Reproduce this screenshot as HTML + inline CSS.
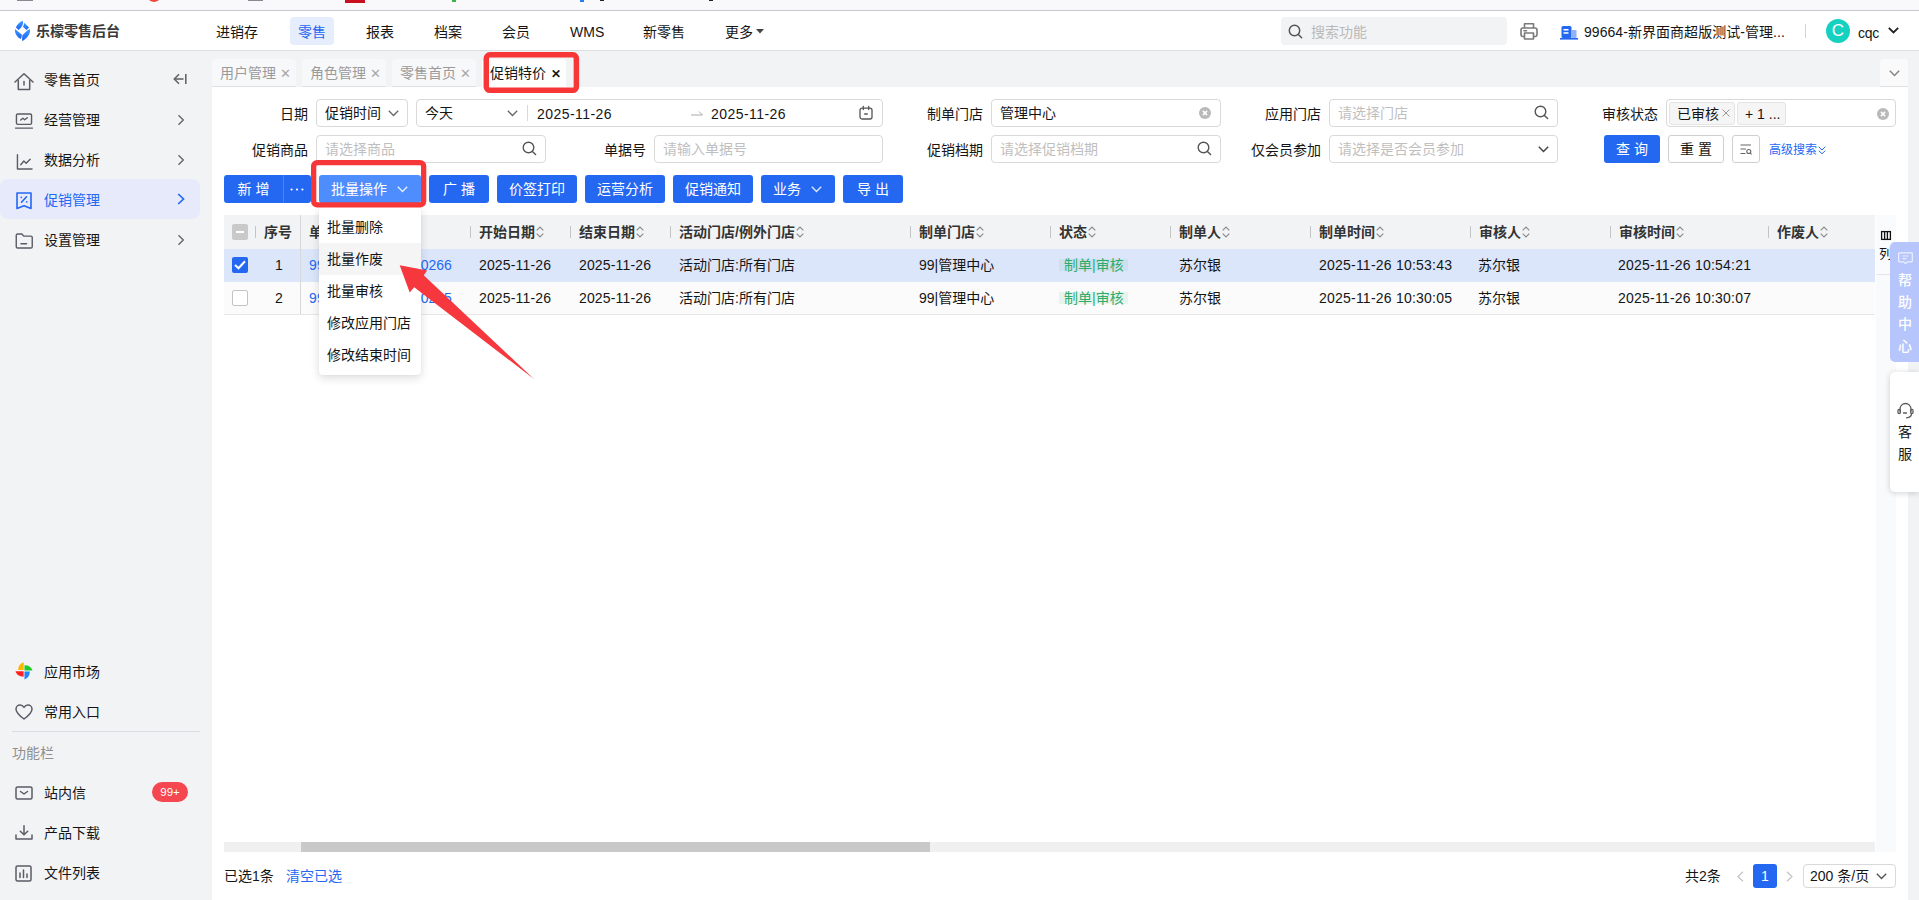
<!DOCTYPE html>
<html lang="zh-CN">
<head>
<meta charset="utf-8">
<title>促销特价 - 乐檬零售后台</title>
<style>
*{box-sizing:border-box;margin:0;padding:0}
html,body{width:1919px;height:900px;overflow:hidden}
body{position:relative;background:#f2f3f5;font-family:"Liberation Sans","Noto Sans CJK SC",sans-serif;font-size:14px;color:#151515;line-height:1}
.abs{position:absolute}
.t{position:absolute;white-space:nowrap;line-height:20px;height:20px}
svg{position:absolute;overflow:visible}
/* top browser strip */
#strip{left:0;top:0;width:1919px;height:11px;background:#f9f9fb;border-bottom:1px solid #c9c9cd}
/* header */
#hdr{left:0;top:11px;width:1919px;height:40px;background:#fff;border-bottom:1px solid #dcdde0}
.nav{top:11px;font-size:14px;color:#151515}
/* sidebar */
#side{left:0;top:51px;width:212px;height:849px;background:#f2f3f5}
.sm{left:44px;font-size:14px;color:#151515}
/* tabs */
.tab{top:59px;height:28px;width:84px;background:#f7f8fa;border-bottom:1px solid #dfe0e3;border-radius:4px 4px 0 0;color:#9a9a9a;font-size:14px;line-height:29.5px;padding-left:8px;white-space:nowrap;overflow:hidden}
.tab i{font-style:normal;font-size:12.5px;margin-left:4px;color:#a8a8a8}
/* content */
#main{left:212px;top:87px;width:1696px;height:813px;background:#fff}
.lbl{font-size:14px;color:#151515;text-align:right}
.inp{position:absolute;height:28px;border:1px solid #d9d9d9;border-radius:4px;background:#fff;font-size:14px;line-height:26px;padding-left:8px;color:#151515;white-space:nowrap}
.ph{color:#bfbfbf}
.btn{position:absolute;top:175px;height:28px;background:#2468f2;color:#fff;border-radius:3px;font-size:14px;line-height:29px;text-align:center;white-space:nowrap}
/* table */
.th{position:absolute;top:215px;height:34px;line-height:34px;font-weight:bold;font-size:14px;color:#333;white-space:nowrap}
.sep{position:absolute;top:226px;width:1px;height:12px;background:#c4c4c4}
.td{position:absolute;height:33px;line-height:33px;font-size:14px;color:#151515;white-space:nowrap}
.mi{position:absolute;left:0;width:102px;height:32px;line-height:33.5px;padding-left:8px;font-size:14px;color:#151515;white-space:nowrap}
</style>
</head>
<body>
<!-- browser strip remnants -->
<div id="strip" class="abs"></div>
<div class="abs" style="left:17px;top:0;width:16px;height:1px;background:#8a8a90"></div>
<div class="abs" style="left:148px;top:-8px;width:12px;height:10px;border-radius:50%;background:#f0483e"></div>
<div class="abs" style="left:248px;top:0;width:15px;height:1px;background:#8a8a90"></div>
<div class="abs" style="left:345px;top:0;width:20px;height:3px;background:#c8101e"></div>
<div class="abs" style="left:452px;top:0;width:4px;height:2px;background:#3bb54a"></div>
<div class="abs" style="left:580px;top:0;width:4px;height:2px;background:#2b7cf0"></div>
<div class="abs" style="left:600px;top:0;width:4px;height:1px;background:#222"></div>
<div class="abs" style="left:709px;top:0;width:4px;height:1px;background:#222"></div>

<!-- header -->
<div id="hdr" class="abs"></div>
<svg style="left:10px;top:16px" width="30" height="30" viewBox="0 0 30 30">
  <defs><linearGradient id="lg" x1="0" y1="0" x2="0" y2="1"><stop offset="0" stop-color="#3d9bff"/><stop offset="1" stop-color="#1f63f3"/></linearGradient></defs>
  <g fill="url(#lg)">
  <path d="M12.9 4.8 C13.4 8.6 12.4 10.6 8.6 14.1 L5.9 11.4 C6.6 9 10.2 5.6 12.9 4.8 Z"/>
  <path d="M14.2 6.8 L19.1 11.5 L16.5 14 L13 10.7 C13.8 9.3 14.1 8.1 14.2 6.8 Z"/>
  <path d="M5 13 L12 18.8 C11.8 20.5 11.4 21.8 10.8 23.1 C6.8 20.8 4.5 17.4 5 13 Z"/>
  <path d="M20 13 C20.6 18.5 16.4 23 12.2 25 C11.9 22.6 12.1 20.6 12.5 18.9 L17.3 14.5 Z"/>
  </g>
</svg>
<div class="t" style="left:36px;top:21px;font-size:14px;font-weight:bold;color:#3a3a3a;letter-spacing:0">乐檬零售后台</div>

<div class="t nav" style="left:216px;top:22px">进销存</div>
<div class="abs" style="left:290px;top:17px;width:44px;height:28px;background:#e6edfd;border-radius:4px"></div>
<div class="t nav" style="left:298px;top:22px;color:#2468f2">零售</div>
<div class="t nav" style="left:366px;top:22px">报表</div>
<div class="t nav" style="left:434px;top:22px">档案</div>
<div class="t nav" style="left:502px;top:22px">会员</div>
<div class="t nav" style="left:570px;top:22px">WMS</div>
<div class="t nav" style="left:643px;top:22px">新零售</div>
<div class="t nav" style="left:725px;top:22px">更多</div>
<svg style="left:756px;top:29px" width="8" height="5" viewBox="0 0 8 5"><path d="M0 0 H8 L4 4.5 Z" fill="#444"/></svg>

<div class="abs" style="left:1281px;top:17px;width:226px;height:28px;background:#f2f3f5;border-radius:4px"></div>
<svg style="left:1288px;top:24px" width="15" height="15" viewBox="0 0 15 15" fill="none" stroke="#555" stroke-width="1.5"><circle cx="6.5" cy="6.5" r="5.2"/><path d="M10.4 10.4 L13.6 13.8" stroke-linecap="round"/></svg>
<div class="t" style="left:1311px;top:22px;color:#b9b9b9">搜索功能</div>
<svg style="left:1520px;top:21.5px" width="18" height="18" viewBox="0 0 18 18" fill="none" stroke="#7a7a7a" stroke-width="1.6" stroke-linejoin="round"><path d="M4.5 6 V1.8 H13.5 V6"/><rect x="1" y="6" width="16" height="8.5" rx="2"/><rect x="4.5" y="11" width="9" height="6" fill="#fff"/><path d="M4 8.8 H6.5" stroke-linecap="round"/></svg>
<svg style="left:1560px;top:26px" width="18" height="14" viewBox="0 0 18 14"><rect x="1.5" y="0" width="10" height="12" rx="1.5" fill="#2468f2"/><rect x="11.5" y="4" width="5" height="8" fill="#8fb2fa"/><rect x="0" y="12" width="18" height="1.6" fill="#2468f2"/><rect x="3.5" y="3" width="5" height="1.5" fill="#fff"/><rect x="3.5" y="6.2" width="5" height="1.5" fill="#fff"/></svg>
<div class="t" style="left:1584px;top:22px;letter-spacing:.05px">99664-新界面商超版测试-管理...</div>
<div class="abs" style="left:1805px;top:24px;width:1px;height:14px;background:#d4d4d4"></div>
<div class="abs" style="left:1826px;top:19px;width:24px;height:24px;border-radius:50%;background:#14d1c0;color:#fff;font-size:17px;line-height:24px;text-align:center">C</div>
<div class="t" style="left:1858px;top:22.5px;letter-spacing:-.3px">cqc</div>
<svg style="left:1888px;top:27px" width="11" height="7" viewBox="0 0 11 7" fill="none" stroke="#222" stroke-width="1.8"><path d="M0.8 0.8 L5.5 5.5 L10.2 0.8"/></svg>

<!-- sidebar -->
<div id="side" class="abs"></div>
<div class="abs" style="left:0;top:179px;width:200px;height:40px;border-radius:8px;background:#e6eafa"></div>

<svg style="left:14px;top:71.5px" width="20" height="20" viewBox="0 0 20 20" fill="none" stroke="#5b5b66" stroke-width="1.5" stroke-linejoin="round" stroke-linecap="round"><path d="M1 10 L10 1.8 L19 10"/><path d="M4.3 8.5 V17.5 H15.7 V8.5"/><path d="M10 9.5 V13"/></svg>
<div class="t sm" style="top:70px">零售首页</div>
<svg style="left:173px;top:73px" width="14" height="12" viewBox="0 0 14 12" fill="none" stroke="#666" stroke-width="1.6"><path d="M12.8 1 V11"/><path d="M10.5 6 H1.5"/><path d="M6 1.2 L1.3 6 L6 10.8"/></svg>

<svg style="left:15px;top:113px" width="18" height="17" viewBox="0 0 19 18" fill="none" stroke="#5b5b66" stroke-width="1.5" stroke-linejoin="round" stroke-linecap="round"><rect x="1.5" y="1" width="16" height="11" rx="1.5"/><path d="M0.5 16 H18.5"/><path d="M6 7.5 L8.3 5.5 L10.2 7.2 L13 5"/></svg>
<div class="t sm" style="top:110px">经营管理</div>
<svg style="left:177px;top:114px" width="8" height="12" viewBox="0 0 8 12" fill="none" stroke="#666" stroke-width="1.4"><path d="M1.5 1.2 L6.3 6 L1.5 10.8"/></svg>

<svg style="left:15.5px;top:153.5px" width="17" height="16" viewBox="0 0 18 17" fill="none" stroke="#5b5b66" stroke-width="1.5" stroke-linejoin="round" stroke-linecap="round"><path d="M1.5 0.8 V16 H17"/><path d="M5 11.5 L8.3 7.5 L10.8 9.8 L15 5.5"/></svg>
<div class="t sm" style="top:150px">数据分析</div>
<svg style="left:177px;top:154px" width="8" height="12" viewBox="0 0 8 12" fill="none" stroke="#666" stroke-width="1.4"><path d="M1.5 1.2 L6.3 6 L1.5 10.8"/></svg>

<svg style="left:16px;top:192px" width="16" height="18" viewBox="0 0 16 18" fill="none" stroke="#2468f2" stroke-width="1.6" stroke-linejoin="round" stroke-linecap="round"><path d="M1 1 H15 V16.5 L8 13.8 L1 16.5 Z"/><path d="M10.5 4.8 L5.5 10.2"/><path d="M5.3 5.3 V5.4 M10.7 9.8 V9.9"/></svg>
<div class="t sm" style="top:190px;color:#2468f2">促销管理</div>
<svg style="left:177px;top:193px" width="8" height="12" viewBox="0 0 8 12" fill="none" stroke="#2468f2" stroke-width="1.7"><path d="M1.2 1 L6.5 6 L1.2 11"/></svg>

<svg style="left:15px;top:233px" width="18.5" height="16" viewBox="0 0 19 17" fill="none" stroke="#5b5b66" stroke-width="1.5" stroke-linejoin="round" stroke-linecap="round"><path d="M1 2.5 Q1 1 2.5 1 H7 L9 3.3 H16.5 Q18 3.3 18 4.8 V14.5 Q18 16 16.5 16 H2.5 Q1 16 1 14.5 Z"/><path d="M6 11.5 H12"/></svg>
<div class="t sm" style="top:230px">设置管理</div>
<svg style="left:177px;top:234px" width="8" height="12" viewBox="0 0 8 12" fill="none" stroke="#666" stroke-width="1.4"><path d="M1.5 1.2 L6.3 6 L1.5 10.8"/></svg>

<!-- sidebar bottom -->
<svg style="left:8px;top:656px" width="32" height="32" viewBox="0 0 32 32"><path d="M15.7 6.3 V13.9 H10.2 C10.2 10 12.5 7.2 15.7 6.3 Z" fill="#ffb400"/><path d="M24.5 14.5 H16.5 V9.2 C20.5 9.2 23.5 11 24.5 14.5 Z" fill="#1ecb2b"/><path d="M7.5 15.3 H15.6 V20.7 C11.5 20.7 8.5 18.8 7.5 15.3 Z" fill="#ff2020"/><path d="M16.5 23.5 V15.6 H21.8 C21.8 19.5 19.8 22.3 16.5 23.5 Z" fill="#2285ff"/></svg>
<div class="t sm" style="top:662px">应用市场</div>
<svg style="left:15px;top:704px" width="18" height="16" viewBox="0 0 18 16" fill="none" stroke="#5b5b66" stroke-width="1.5" stroke-linejoin="round"><path d="M9 15 C3 10.5 1 8 1 5.2 C1 2.8 2.8 1 5 1 C6.8 1 8.2 2 9 3.5 C9.8 2 11.2 1 13 1 C15.2 1 17 2.8 17 5.2 C17 8 15 10.5 9 15 Z"/></svg>
<div class="t sm" style="top:702px">常用入口</div>
<div class="abs" style="left:12px;top:731px;width:188px;height:1px;background:#dcdde0"></div>
<div class="t" style="left:12px;top:743px;font-size:14px;color:#8f8f8f">功能栏</div>
<svg style="left:15px;top:786px" width="18" height="14" viewBox="0 0 18 14" fill="none" stroke="#5b5b66" stroke-width="1.5" stroke-linejoin="round" stroke-linecap="round"><rect x="1" y="1" width="16" height="12" rx="1.5"/><path d="M5.5 5.5 L9 8 L12.5 5.5"/></svg>
<div class="t sm" style="top:783px">站内信</div>
<div class="abs" style="left:152px;top:782px;width:36px;height:20px;border-radius:10px;background:#f5474f;color:#fff;font-size:11.5px;line-height:20px;text-align:center">99+</div>
<svg style="left:15px;top:825px" width="18" height="15" viewBox="0 0 18 15" fill="none" stroke="#5b5b66" stroke-width="1.5" stroke-linejoin="round" stroke-linecap="round"><path d="M9 0.8 V9.5"/><path d="M5.3 6.3 L9 9.8 L12.7 6.3"/><path d="M1 10 V14 H17 V10"/></svg>
<div class="t sm" style="top:823px">产品下载</div>
<svg style="left:15px;top:865px" width="17" height="17" viewBox="0 0 17 17" fill="none" stroke="#5b5b66" stroke-width="1.5" stroke-linejoin="round" stroke-linecap="round"><rect x="1" y="1" width="15" height="15" rx="1.5"/><path d="M5 8 V12.5 M8.5 5 V12.5 M12 9 V12.5"/></svg>
<div class="t sm" style="top:863px">文件列表</div>

<!-- tabs -->
<div class="abs tab" style="left:212px">用户管理<i>✕</i></div>
<div class="abs tab" style="left:302px">角色管理<i>✕</i></div>
<div class="abs tab" style="left:392px">零售首页<i>✕</i></div>
<div class="abs tab" style="left:482px;background:#fff;color:#151515;border-bottom-color:#fff;height:28px">促销特价<i style="color:#151515;font-weight:bold;font-size:11.5px;margin-left:5px">✕</i></div>
<div class="abs" style="left:1880px;top:59px;width:28px;height:28px;background:#fafafa;border-bottom:1px solid #dfe0e3;border-radius:4px 4px 0 0"></div>
<svg style="left:1888.5px;top:69.5px" width="11" height="7" viewBox="0 0 11 7" fill="none" stroke="#858585" stroke-width="1.5"><path d="M0.8 0.8 L5.5 5.5 L10.2 0.8"/></svg>

<div id="main" class="abs"></div>
<!-- right gutter tool column -->
<div class="abs" style="left:1876px;top:215px;width:20px;height:637px;background:#f9fafb"></div>

<!-- filter row 1 -->
<div class="t lbl" style="left:252px;top:104px;width:56px">日期</div>
<div class="inp" style="left:316px;top:99px;width:92px">促销时间</div>
<svg style="left:388px;top:110px" width="11" height="7" viewBox="0 0 11 7" fill="none" stroke="#666" stroke-width="1.3"><path d="M0.8 0.8 L5.5 5.5 L10.2 0.8"/></svg>
<div class="inp" style="left:416px;top:99px;width:467px">今天</div>
<svg style="left:507px;top:110px" width="11" height="7" viewBox="0 0 11 7" fill="none" stroke="#666" stroke-width="1.3"><path d="M0.8 0.8 L5.5 5.5 L10.2 0.8"/></svg>
<div class="abs" style="left:527px;top:105px;width:1px;height:16px;background:#d9d9d9"></div>
<div class="t" style="left:537px;top:104px;letter-spacing:.45px">2025-11-26</div>
<svg style="left:691px;top:110px" width="12" height="8" viewBox="0 0 12 8" fill="none" stroke="#aaa" stroke-width="1"><path d="M0 5 H11.5 L8 1.5"/></svg>
<div class="t" style="left:711px;top:104px;letter-spacing:.45px">2025-11-26</div>
<svg style="left:859px;top:106px" width="14" height="14" viewBox="0 0 14 14" fill="none" stroke="#555" stroke-width="1.3" stroke-linejoin="round"><rect x="1" y="2.2" width="12" height="10.8" rx="2"/><path d="M4.3 0.5 V3.5 M9.7 0.5 V3.5 M5.7 8 H8.3" stroke-linecap="round"/></svg>

<div class="t lbl" style="left:927px;top:104px;width:56px">制单门店</div>
<div class="inp" style="left:991px;top:99px;width:230px">管理中心</div>
<svg style="left:1199px;top:107px" width="12" height="12" viewBox="0 0 12 12"><circle cx="6" cy="6" r="6" fill="#b9b9b9"/><path d="M3.9 3.9 L8.1 8.1 M8.1 3.9 L3.9 8.1" stroke="#fff" stroke-width="1.5"/></svg>

<div class="t lbl" style="left:1265px;top:104px;width:56px">应用门店</div>
<div class="inp ph" style="left:1329px;top:99px;width:229px">请选择门店</div>
<svg style="left:1534px;top:105px" width="15" height="15" viewBox="0 0 15 15" fill="none" stroke="#555" stroke-width="1.4"><circle cx="6.5" cy="6.5" r="5.3"/><path d="M10.4 10.4 L13.6 13.6" stroke-linecap="round"/></svg>

<div class="t lbl" style="left:1602px;top:104px;width:56px">审核状态</div>
<div class="inp" style="left:1666px;top:99px;width:230px"></div>
<div class="abs" style="left:1669px;top:102px;width:66px;height:23px;background:#f5f5f5;border:1px solid #e4e4e4;border-radius:3px"></div>
<div class="t" style="left:1677px;top:104px">已审核</div>
<svg style="left:1722px;top:109px" width="8" height="8" viewBox="0 0 8 8" stroke="#999" stroke-width="1" fill="none"><path d="M0.5 0.5 L7.5 7.5 M7.5 0.5 L0.5 7.5"/></svg>
<div class="abs" style="left:1737px;top:102px;width:49px;height:23px;background:#f5f5f5;border:1px solid #e4e4e4;border-radius:3px"></div>
<div class="t" style="left:1745px;top:104px">+ 1 ...</div>
<svg style="left:1877px;top:108px" width="12" height="12" viewBox="0 0 12 12"><circle cx="6" cy="6" r="6" fill="#b9b9b9"/><path d="M3.9 3.9 L8.1 8.1 M8.1 3.9 L3.9 8.1" stroke="#fff" stroke-width="1.5"/></svg>

<!-- filter row 2 -->
<div class="t lbl" style="left:252px;top:140px;width:56px">促销商品</div>
<div class="inp ph" style="left:316px;top:135px;width:229.5px">请选择商品</div>
<svg style="left:522px;top:141px" width="15" height="15" viewBox="0 0 15 15" fill="none" stroke="#555" stroke-width="1.4"><circle cx="6.5" cy="6.5" r="5.3"/><path d="M10.4 10.4 L13.6 13.6" stroke-linecap="round"/></svg>
<div class="t lbl" style="left:590px;top:140px;width:56px">单据号</div>
<div class="inp ph" style="left:654px;top:135px;width:229px">请输入单据号</div>
<div class="t lbl" style="left:927px;top:140px;width:56px">促销档期</div>
<div class="inp ph" style="left:991px;top:135px;width:230px">请选择促销档期</div>
<svg style="left:1197px;top:141px" width="15" height="15" viewBox="0 0 15 15" fill="none" stroke="#555" stroke-width="1.4"><circle cx="6.5" cy="6.5" r="5.3"/><path d="M10.4 10.4 L13.6 13.6" stroke-linecap="round"/></svg>
<div class="t lbl" style="left:1241px;top:140px;width:80px">仅会员参加</div>
<div class="inp ph" style="left:1329px;top:135px;width:229px">请选择是否会员参加</div>
<svg style="left:1538px;top:146px" width="11" height="7" viewBox="0 0 11 7" fill="none" stroke="#444" stroke-width="1.5"><path d="M0.8 0.8 L5.5 5.5 L10.2 0.8"/></svg>

<div class="abs" style="left:1604px;top:135px;width:56px;height:28px;background:#2468f2;border-radius:3px;color:#fff;line-height:29.5px;text-align:center;font-size:14px">查 询</div>
<div class="abs" style="left:1668px;top:135px;width:56px;height:28px;background:#fff;border:1px solid #cfcfcf;border-radius:3px;color:#151515;line-height:27.5px;text-align:center;font-size:14px">重 置</div>
<div class="abs" style="left:1732px;top:135px;width:28px;height:28px;background:#fff;border:1px solid #cfcfcf;border-radius:3px"></div>
<svg style="left:1740px;top:144px" width="12" height="11" viewBox="0 0 12 11" fill="none" stroke="#666" stroke-width="1.1"><path d="M0.5 1 H11 M0.5 5 H6 M0.5 9.5 H5.5"/><circle cx="8.8" cy="7.5" r="2"/><path d="M10.3 9 L11.6 10.4"/></svg>
<div class="t" style="left:1769px;top:140px;font-size:12px;color:#2468f2">高级搜索</div>
<svg style="left:1818px;top:146px" width="8" height="9" viewBox="0 0 8 9" fill="none" stroke="#2468f2" stroke-width="1"><path d="M0.7 0.8 L4 4 L7.3 0.8 M0.7 4.6 L4 7.8 L7.3 4.6"/></svg>

<!-- action buttons -->
<div class="btn" style="left:224px;width:59px;border-radius:3px 0 0 3px">新 增</div>
<div class="btn" style="left:283px;width:28px;border-radius:0 3px 3px 0;border-left:1px solid #4a82f5"></div>
<svg style="left:290px;top:188px" width="14" height="3" viewBox="0 0 14 3" fill="#fff"><circle cx="1.6" cy="1.5" r="1.1"/><circle cx="7" cy="1.5" r="1.1"/><circle cx="12.4" cy="1.5" r="1.1"/></svg>
<div class="btn" style="left:319px;width:102px;background:#4d8dfd;text-align:left;padding-left:12px">批量操作</div>
<svg style="left:397px;top:186px" width="11" height="7" viewBox="0 0 11 7" fill="none" stroke="#fff" stroke-opacity=".85" stroke-width="1.4"><path d="M0.8 0.8 L5.5 5.5 L10.2 0.8"/></svg>
<div class="btn" style="left:429px;width:60px">广 播</div>
<div class="btn" style="left:497px;width:80px">价签打印</div>
<div class="btn" style="left:585px;width:80px">运营分析</div>
<div class="btn" style="left:673px;width:80px">促销通知</div>
<div class="btn" style="left:761px;width:74px;text-align:left;padding-left:12px">业务</div>
<svg style="left:811px;top:186px" width="11" height="7" viewBox="0 0 11 7" fill="none" stroke="#fff" stroke-opacity=".85" stroke-width="1.4"><path d="M0.8 0.8 L5.5 5.5 L10.2 0.8"/></svg>
<div class="btn" style="left:843px;width:60px">导 出</div>

<!-- table -->
<div class="abs" style="left:224px;top:215px;width:1651px;height:34px;background:#f2f3f5"></div>
<div class="abs" style="left:224px;top:249px;width:1651px;height:33px;background:#dce6fb"></div>
<div class="abs" style="left:224px;top:282px;width:1651px;height:33px;background:#fafbfa;border-bottom:1px solid #e6e6e6"></div>
<div class="abs" style="left:300px;top:215px;width:1px;height:99px;background:#d8d8d8"></div>
<div class="abs" style="left:232px;top:224px;width:16px;height:16px;background:#c9c9c9;border-radius:2px"></div>
<div class="abs" style="left:236px;top:231px;width:8px;height:2px;background:#fff"></div>
<div class="sep" style="left:255px"></div>
<div class="th" style="left:264px">序号</div>
<div class="th" style="left:309px">单据号</div>
<div class="sep" style="left:470px"></div>
<div class="th" style="left:479px">开始日期<svg style="position:relative;display:inline-block;vertical-align:-1px;margin-left:1px" width="8" height="12" viewBox="0 0 8 12" fill="none" stroke="#8a8a8a" stroke-width="1.15"><path d="M0.7 4.4 L4 1 L7.3 4.4 M0.7 7.6 L4 11 L7.3 7.6"/></svg></div>
<div class="sep" style="left:570px"></div>
<div class="th" style="left:579px">结束日期<svg style="position:relative;display:inline-block;vertical-align:-1px;margin-left:1px" width="8" height="12" viewBox="0 0 8 12" fill="none" stroke="#8a8a8a" stroke-width="1.15"><path d="M0.7 4.4 L4 1 L7.3 4.4 M0.7 7.6 L4 11 L7.3 7.6"/></svg></div>
<div class="sep" style="left:670px"></div>
<div class="th" style="left:679px">活动门店/例外门店<svg style="position:relative;display:inline-block;vertical-align:-1px;margin-left:1px" width="8" height="12" viewBox="0 0 8 12" fill="none" stroke="#8a8a8a" stroke-width="1.15"><path d="M0.7 4.4 L4 1 L7.3 4.4 M0.7 7.6 L4 11 L7.3 7.6"/></svg></div>
<div class="sep" style="left:910px"></div>
<div class="th" style="left:919px">制单门店<svg style="position:relative;display:inline-block;vertical-align:-1px;margin-left:1px" width="8" height="12" viewBox="0 0 8 12" fill="none" stroke="#8a8a8a" stroke-width="1.15"><path d="M0.7 4.4 L4 1 L7.3 4.4 M0.7 7.6 L4 11 L7.3 7.6"/></svg></div>
<div class="sep" style="left:1050px"></div>
<div class="th" style="left:1059px">状态<svg style="position:relative;display:inline-block;vertical-align:-1px;margin-left:1px" width="8" height="12" viewBox="0 0 8 12" fill="none" stroke="#8a8a8a" stroke-width="1.15"><path d="M0.7 4.4 L4 1 L7.3 4.4 M0.7 7.6 L4 11 L7.3 7.6"/></svg></div>
<div class="sep" style="left:1170px"></div>
<div class="th" style="left:1179px">制单人<svg style="position:relative;display:inline-block;vertical-align:-1px;margin-left:1px" width="8" height="12" viewBox="0 0 8 12" fill="none" stroke="#8a8a8a" stroke-width="1.15"><path d="M0.7 4.4 L4 1 L7.3 4.4 M0.7 7.6 L4 11 L7.3 7.6"/></svg></div>
<div class="sep" style="left:1310px"></div>
<div class="th" style="left:1319px">制单时间<svg style="position:relative;display:inline-block;vertical-align:-1px;margin-left:1px" width="8" height="12" viewBox="0 0 8 12" fill="none" stroke="#8a8a8a" stroke-width="1.15"><path d="M0.7 4.4 L4 1 L7.3 4.4 M0.7 7.6 L4 11 L7.3 7.6"/></svg></div>
<div class="sep" style="left:1470px"></div>
<div class="th" style="left:1479px">审核人<svg style="position:relative;display:inline-block;vertical-align:-1px;margin-left:1px" width="8" height="12" viewBox="0 0 8 12" fill="none" stroke="#8a8a8a" stroke-width="1.15"><path d="M0.7 4.4 L4 1 L7.3 4.4 M0.7 7.6 L4 11 L7.3 7.6"/></svg></div>
<div class="sep" style="left:1610px"></div>
<div class="th" style="left:1619px">审核时间<svg style="position:relative;display:inline-block;vertical-align:-1px;margin-left:1px" width="8" height="12" viewBox="0 0 8 12" fill="none" stroke="#8a8a8a" stroke-width="1.15"><path d="M0.7 4.4 L4 1 L7.3 4.4 M0.7 7.6 L4 11 L7.3 7.6"/></svg></div>
<div class="sep" style="left:1768px"></div>
<div class="th" style="left:1777px">作废人<svg style="position:relative;display:inline-block;vertical-align:-1px;margin-left:1px" width="8" height="12" viewBox="0 0 8 12" fill="none" stroke="#8a8a8a" stroke-width="1.15"><path d="M0.7 4.4 L4 1 L7.3 4.4 M0.7 7.6 L4 11 L7.3 7.6"/></svg></div>
<div class="abs" style="left:232px;top:257px;width:16px;height:16px;background:#2468f2;border-radius:2px"></div>
<svg style="left:234px;top:260px" width="12" height="10" viewBox="0 0 12 10" fill="none" stroke="#fff" stroke-width="2"><path d="M1 5 L4.5 8.3 L11 1.3"/></svg>
<div class="td" style="left:257px;top:249px;width:44px;text-align:center">1</div>
<div class="td" style="left:309px;top:249px;color:#2468f2;"><span style="letter-spacing:.27px">99664202511260</span>0266</div>
<div class="td" style="left:479px;top:249px;letter-spacing:.15px">2025-11-26</div>
<div class="td" style="left:579px;top:249px;letter-spacing:.15px">2025-11-26</div>
<div class="td" style="left:679px;top:249px">活动门店:所有门店</div>
<div class="td" style="left:919px;top:249px">99|管理中心</div>
<div class="abs" style="left:1059px;top:259px;width:69px;height:12px;background:rgba(47,171,107,.09)"></div>
<div class="td" style="left:1064px;top:249px;color:#2fab6b">制单|审核</div>
<div class="td" style="left:1179px;top:249px">苏尔银</div>
<div class="td" style="left:1319px;top:249px;letter-spacing:.22px">2025-11-26 10:53:43</div>
<div class="td" style="left:1478px;top:249px">苏尔银</div>
<div class="td" style="left:1618px;top:249px;letter-spacing:.22px">2025-11-26 10:54:21</div>
<div class="abs" style="left:232px;top:290px;width:16px;height:16px;background:#fff;border:1px solid #c4c4c4;border-radius:2px"></div>
<div class="td" style="left:257px;top:282px;width:44px;text-align:center">2</div>
<div class="td" style="left:309px;top:282px;color:#2468f2;"><span style="letter-spacing:.27px">99664202511260</span>0265</div>
<div class="td" style="left:479px;top:282px;letter-spacing:.15px">2025-11-26</div>
<div class="td" style="left:579px;top:282px;letter-spacing:.15px">2025-11-26</div>
<div class="td" style="left:679px;top:282px">活动门店:所有门店</div>
<div class="td" style="left:919px;top:282px">99|管理中心</div>
<div class="abs" style="left:1059px;top:292px;width:69px;height:12px;background:rgba(47,171,107,.09)"></div>
<div class="td" style="left:1064px;top:282px;color:#2fab6b">制单|审核</div>
<div class="td" style="left:1179px;top:282px">苏尔银</div>
<div class="td" style="left:1319px;top:282px;letter-spacing:.22px">2025-11-26 10:30:05</div>
<div class="td" style="left:1478px;top:282px">苏尔银</div>
<div class="td" style="left:1618px;top:282px;letter-spacing:.22px">2025-11-26 10:30:07</div>
<div class="abs" style="left:1876px;top:215px;width:20px;height:60px;background:#fafbfc;border-bottom:1px solid #e6e6e6"></div>
<svg style="left:1881px;top:231px" width="10" height="9" viewBox="0 0 10 9" fill="none" stroke="#111" stroke-width="1.3"><rect x="0.6" y="0.6" width="8.8" height="7.8"/><path d="M3.6 0.6 V8.4 M6.4 0.6 V8.4"/></svg>
<div class="t" style="left:1879px;top:244px;font-size:13px;color:#151515">列</div>
<!-- dropdown -->
<div class="abs" style="left:319px;top:207px;width:102px;height:168px;background:#fff;border-radius:4px;box-shadow:0 3px 10px rgba(0,0,0,.14),0 0 2px rgba(0,0,0,.06)">
<div class="mi" style="top:4px">批量删除</div>
<div class="mi" style="top:36px;background:#f5f5f5">批量作废</div>
<div class="mi" style="top:68px">批量审核</div>
<div class="mi" style="top:100px">修改应用门店</div>
<div class="mi" style="top:132px">修改结束时间</div>
</div>
<!-- annotations -->
<svg style="left:0;top:0" width="1919" height="900" viewBox="0 0 1919 900"><rect x="486.3" y="54.8" width="90.1" height="35.5" rx="3.6" fill="none" stroke="#f73638" stroke-width="5.5"/><rect x="313.65" y="162.6" width="110" height="42.3" rx="3.6" fill="none" stroke="#f73638" stroke-width="5.3"/><polygon points="399.7,265.3 427.2,270.5 423.7,275.3 534.2,379.2 414.2,287.2 409.7,292.5" fill="#f6373d"/></svg>
<!-- footer -->
<div class="abs" style="left:224px;top:842px;width:1651px;height:10px;background:#f0f0f0"></div>
<div class="abs" style="left:301px;top:842px;width:629px;height:10px;background:#c9c9c9"></div>
<div class="t" style="left:224px;top:866px">已选1条</div>
<div class="t" style="left:286px;top:866px;color:#2468f2">清空已选</div>
<div class="t" style="left:1685px;top:866px">共2条</div>
<svg style="left:1737px;top:871px" width="7" height="11" viewBox="0 0 7 11" fill="none" stroke="#c4c4c4" stroke-width="1.2"><path d="M6 0.8 L1 5.5 L6 10.2"/></svg>
<div class="abs" style="left:1753px;top:864px;width:24px;height:24px;background:#2468f2;border-radius:3px;color:#fff;line-height:24px;text-align:center;font-size:14px">1</div>
<svg style="left:1786px;top:871px" width="7" height="11" viewBox="0 0 7 11" fill="none" stroke="#c4c4c4" stroke-width="1.2"><path d="M1 0.8 L6 5.5 L1 10.2"/></svg>
<div class="inp" style="left:1803px;top:864px;width:93px;height:24px;line-height:22px;padding-left:6px">200 条/页</div>
<svg style="left:1876px;top:873px" width="11" height="7" viewBox="0 0 11 7" fill="none" stroke="#555" stroke-width="1.4"><path d="M0.8 0.8 L5.5 5.5 L10.2 0.8"/></svg>
<!-- floating widgets -->
<div class="abs" style="left:1890px;top:242px;width:29px;height:120px;background:#b6c5fb;border-radius:5px 0 0 5px"></div>
<svg style="left:1898px;top:252px" width="15" height="13" viewBox="0 0 15 13" fill="none" stroke="#eef2ff" stroke-width="1.2" stroke-linejoin="round"><path d="M1.5 0.8 H13.5 Q14.3 0.8 14.3 1.6 V9 Q14.3 9.8 13.5 9.8 H9.3 L7.5 11.6 L5.7 9.8 H1.5 Q0.7 9.8 0.7 9 V1.6 Q0.7 0.8 1.5 0.8 Z"/><path d="M4.5 4 H10.5 M4.5 6.6 H8.5"/></svg>
<div class="t" style="left:1898px;top:270px;font-size:14px;font-weight:500;color:#fff;width:14px;text-align:center">帮</div>
<div class="t" style="left:1898px;top:292px;font-size:14px;font-weight:500;color:#fff;width:14px;text-align:center">助</div>
<div class="t" style="left:1898px;top:314px;font-size:14px;font-weight:500;color:#fff;width:14px;text-align:center">中</div>
<div class="t" style="left:1898px;top:336px;font-size:14px;font-weight:500;color:#fff;width:14px;text-align:center">心</div>
<div class="abs" style="left:1890px;top:372px;width:29px;height:120px;background:#fff;border-radius:5px 0 0 5px;box-shadow:0 1px 6px rgba(0,0,0,.18)"></div>
<svg style="left:1897px;top:402px" width="17" height="18" viewBox="0 0 17 18" fill="none" stroke="#5c5c5c" stroke-width="1.3" stroke-linecap="round"><path d="M3 9 V7 A5.5 5.5 0 0 1 14 7 V9"/><rect x="1" y="7.3" width="2.3" height="4.2" rx="1"/><rect x="13.7" y="7.3" width="2.3" height="4.2" rx="1"/><path d="M14.5 11.5 Q14.5 15.5 9.5 15.8"/><path d="M6.5 11 H9.5"/></svg>
<div class="t" style="left:1898px;top:422px;font-size:14px;width:14px;text-align:center">客</div>
<div class="t" style="left:1898px;top:444px;font-size:14px;width:14px;text-align:center">服</div>
</body></html>
